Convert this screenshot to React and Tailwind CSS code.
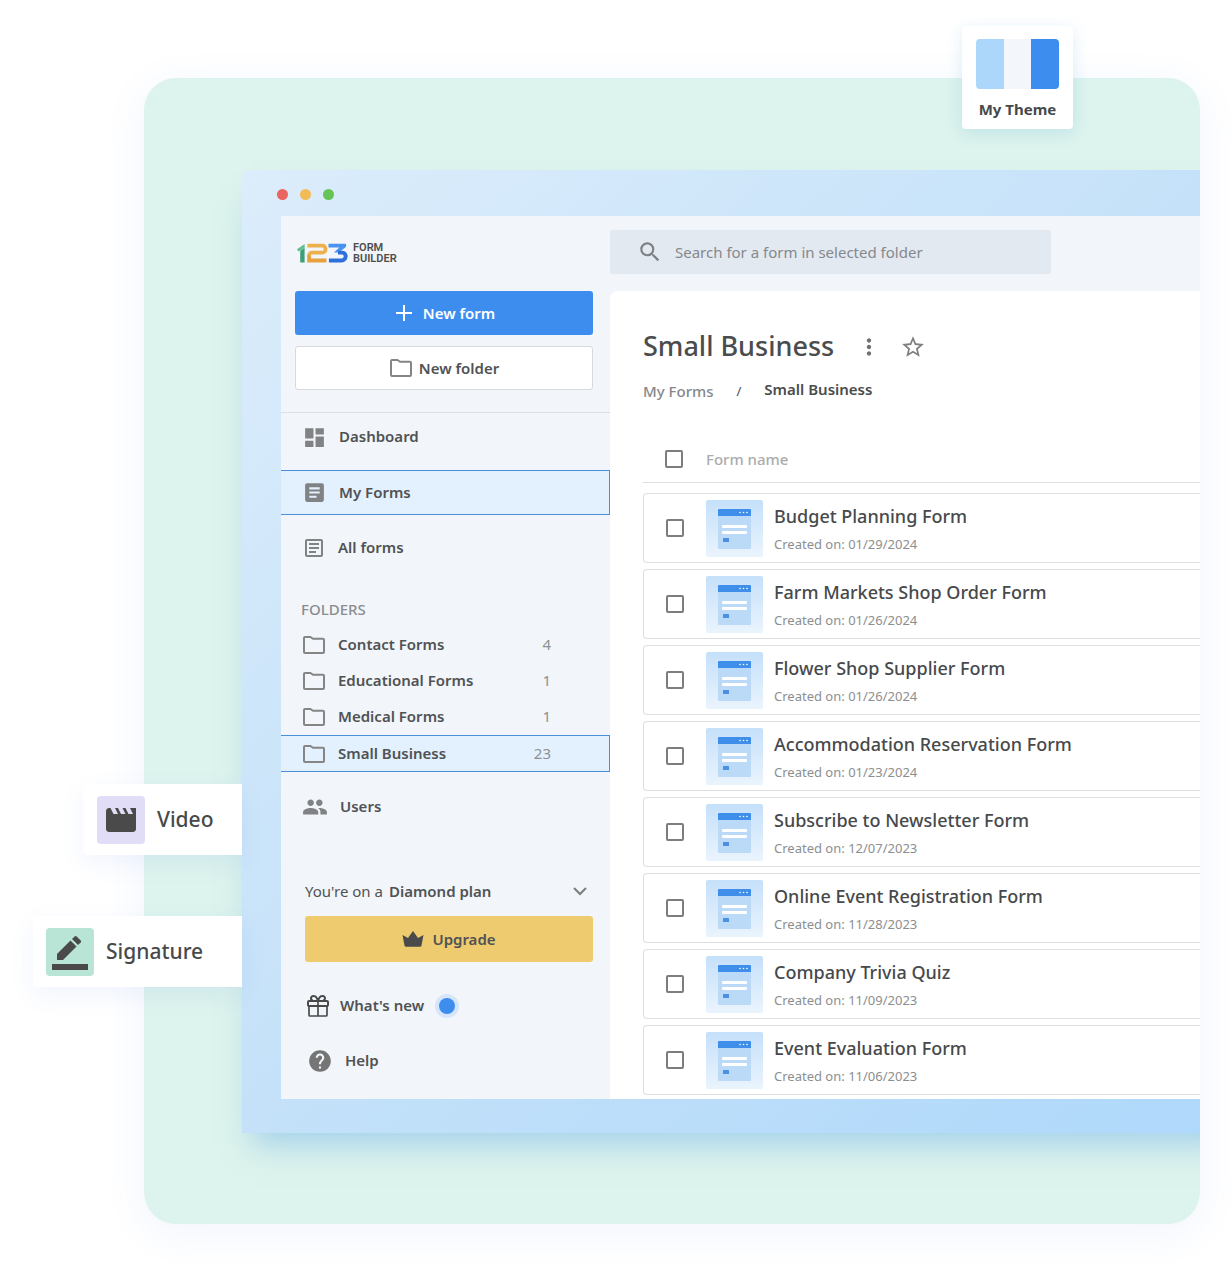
import { useState } from "react";
import {
  MdArticle,
  MdDashboard,
  MdHelp,
  MdMoreVert,
  MdMovie,
  MdOutlineArticle,
  MdPeople,
  MdSearch,
  MdStarBorder,
} from "react-icons/md";

const folders = [
  { name: "Contact Forms", count: 4 },
  { name: "Educational Forms", count: 1 },
  { name: "Medical Forms", count: 1 },
  { name: "Small Business", count: 23 },
];

const forms = [
  { name: "Budget Planning Form", created: "01/29/2024" },
  { name: "Farm Markets Shop Order Form", created: "01/26/2024" },
  { name: "Flower Shop Supplier Form", created: "01/26/2024" },
  { name: "Accommodation Reservation Form", created: "01/23/2024" },
  { name: "Subscribe to Newsletter Form", created: "12/07/2023" },
  { name: "Online Event Registration Form", created: "11/28/2023" },
  { name: "Company Trivia Quiz", created: "11/09/2023" },
  { name: "Event Evaluation Form", created: "11/06/2023" },
];

function FolderIcon() {
  return (
    <svg width="24" height="20" viewBox="0 0 24 20" fill="none" stroke="#858585" strokeWidth="2" strokeLinejoin="round" className="shrink-0">
      <path d="M3 2h5.5l2.500 1.800h10a1 1 0 0 1 1 1V17a1 1 0 0 1-1 1H3a1 1 0 0 1-1-1V3a1 1 0 0 1 1-1z" />
    </svg>
  );
}

function Logo() {
  return (
    <div className="flex items-center gap-[5px]">
      <svg width="51" height="20" viewBox="0 0 51 20" fill="none">
        <path d="M0 6.2 7.6 1v4L1.4 8.6z" fill="#5fbf8f" />
        <path d="M3.2 7.8 7.6 5v14.5H3.2z" fill="#3f9f76" />
        <path d="M10.5 2.6h14.8a3.2 3.2 0 0 1 3.2 3.2v.6a3.2 3.2 0 0 1-3.2 3.2H15a3 3 0 0 0-3 3v.4" stroke="#eeb04a" strokeWidth="3.8" />
        <path d="M10.2 12.4h3.9V15.6h15.4v3.9H10.2z" fill="#e9a03f" />
        <path d="M31.5 .7h17.6v3L42 9.6h-5.2l5.6-5H31.5z" fill="#4a93ee" />
        <path d="M41 9.6h4.4a3.9 3.9 0 0 1 3.3 3.6 4.2 4.2 0 0 1-4.2 4.3H31.9" stroke="#2f6fdc" strokeWidth="3.9" />
      </svg>
      <div className="font-['Roboto',sans-serif] text-[11px] leading-[11px] font-semibold text-[#4d4d4d]">
        FORM
        <br />
        BUILDER
      </div>
    </div>
  );
}

function FormThumb() {
  return (
    <svg width="57" height="57" viewBox="0 0 57 57" className="block">
      <defs>
        <linearGradient id="thumb-bg" x1="0" y1="0" x2="0" y2="1">
          <stop offset="0" stopColor="#c5e0fa" />
          <stop offset="1" stopColor="#eaf4fd" />
        </linearGradient>
      </defs>
      <rect width="57" height="57" rx="2" fill="url(#thumb-bg)" />
      <rect x="12" y="9" width="33" height="40" rx="1" fill="#badaf8" />
      <path d="M13 9h31a1 1 0 0 1 1 1v6H12v-6a1 1 0 0 1 1-1z" fill="#3f8fea" />
      <circle cx="34" cy="12.5" r=".8" fill="#fff" />
      <circle cx="37.5" cy="12.5" r=".8" fill="#fff" />
      <circle cx="41" cy="12.5" r=".8" fill="#fff" />
      <rect x="16" y="25" width="25" height="3" rx="1" fill="#fff" />
      <rect x="16" y="31" width="25" height="3" rx="1" fill="#fff" />
      <rect x="17" y="38" width="6" height="4" rx=".5" fill="#4a8fe0" />
    </svg>
  );
}

function Checkbox({ label, checked, onChange }) {
  return (
    <input
      type="checkbox"
      aria-label={label}
      checked={checked}
      onChange={onChange}
      className="block w-[18px] h-[18px] appearance-none rounded-xs border-2 border-[#7d7d7d] bg-white checked:bg-[#3f8fee]"
    />
  );
}

function NavItem({ icon, label, active }) {
  return (
    <a
      href="#"
      className={
        active
          ? "flex items-center h-[45px] my-[9px] pl-[21px] gap-3 bg-[#e3f0fd] border border-l-0 border-[#4a8fd9]"
          : "flex items-center h-12 pl-[21px] gap-3"
      }
    >
      {icon}
      <span className="pb-0.5">{label}</span>
    </a>
  );
}

function Sidebar({ activeFolder, onSelect }) {
  return (
    <aside className="w-[329px] shrink-0 text-[15px] leading-6 font-semibold text-[#505254]">
      <div className="h-[75px] pl-4 pt-[26px]">
        <Logo />
      </div>

      <div className="flex flex-col gap-[11px] pl-[14px] pr-[17px] pb-[22px] border-b border-[#dcdfe3]">
        <button className="flex items-center justify-center gap-2 h-11 rounded-[3px] bg-[#3d8dee] text-white">
          <svg width="22" height="22" viewBox="0 0 22 22" stroke="currentColor" strokeWidth="2">
            <path d="M11 3v16M3 11h16" />
          </svg>
          New form
        </button>
        <button className="flex items-center justify-center gap-1.5 h-11 rounded-[3px] bg-white border border-[#d6d9dd]">
          <FolderIcon />
          New folder
        </button>
      </div>

      <nav>
        <NavItem icon={<MdDashboard size={25} color="#808284" />} label="Dashboard" />
        <NavItem icon={<MdArticle size={25} color="#808284" />} label="My Forms" active />
        <NavItem icon={<MdOutlineArticle size={24} color="#808284" />} label="All forms" />

        <h2 className="mt-[25px] mb-[6px] pl-5 font-medium text-[#8a8c8f]">FOLDERS</h2>
        {folders.map((f) => (
          <button
            key={f.name}
            onClick={() => onSelect(f.name)}
            className={
              f.name === activeFolder
                ? "flex items-center w-full h-[37px] pl-[21px] pr-[58px] gap-3 bg-[#e3f0fd] border border-l-0 border-[#4a8fd9]"
                : "flex items-center w-full h-9 pl-[21px] pr-[59px] gap-3"
            }
          >
            <FolderIcon />
            <span className="pb-0.5">{f.name}</span>
            <span className="ml-auto pb-0.5 font-normal text-[#8d9196]">{f.count}</span>
          </button>
        ))}

        <div className="mt-[11px]">
          <NavItem icon={<MdPeople size={26} color="#808284" />} label="Users" />
        </div>
      </nav>

      <div className="mt-12 pl-6 pr-[17px]">
        <button className="flex items-center w-full pr-1">
          <span className="flex gap-1.5">
            <span className="font-normal">You're on a</span>
            <span>Diamond plan</span>
          </span>
          <svg width="18" height="18" viewBox="0 0 18 18" fill="none" stroke="#7d7d7d" strokeWidth="2" className="ml-auto">
            <path d="m3 6 6 6 6-6" />
          </svg>
        </button>
        <button className="mt-[13px] flex items-center justify-center gap-2 w-full h-[46px] rounded-[3px] bg-[#eecb6f]">
          <svg width="22" height="18" viewBox="0 0 22 18" fill="#4a4a4a">
            <path d="M.5 5 6 8 11 1l5 7 5.500-3L19.500 15.500a1.500 1.500 0 0 1-1.500 1.200H4a1.500 1.500 0 0 1-1.500-1.200z" />
          </svg>
          Upgrade
        </button>
      </div>

      <a href="#" className="mt-5 flex items-center h-12 pl-[25px] gap-2.5">
        <svg width="24" height="24" viewBox="0 0 24 24" fill="none" stroke="#4a4a4a" strokeWidth="2">
          <rect x="2" y="7" width="20" height="5" rx="1" />
          <path d="M3 12v9a1 1 0 0 0 1 1h16a1 1 0 0 0 1-1v-9M12 7v15" strokeWidth="1.700" />
          <path d="M12 7C11 3.500 9.500 2 7.800 2a2.300 2.300 0 0 0-1 4.500M12 7c1-3.500 2.500-5 4.200-5a2.300 2.300 0 0 1 1 4.500" />
        </svg>
        <span className="pb-0.5">What's new</span>
        <span className="ml-[5px] w-4 h-4 rounded-full bg-[#3d8dee] ring-4 ring-[#d5e6fa]" />
      </a>
      <a href="#" className="mt-[7px] mb-[14px] flex items-center h-12 pl-[26px] gap-3">
        <MdHelp size={26} color="#757575" />
        <span className="pb-0.5">Help</span>
      </a>
    </aside>
  );
}

function FormsTable() {
  const [selected, setSelected] = useState([]);

  const toggle = (name) => {
    setSelected((prev) => (prev.includes(name) ? prev.filter((n) => n !== name) : [...prev, name]));
  };

  return (
    <table className="w-full border-separate border-spacing-x-0 border-spacing-y-[6px] text-left">
      <thead>
        <tr>
          <th className="w-[63px] p-0 pb-1">
            <div className="flex items-center h-[47px] pl-[22px] border-b border-[#dddfe1]">
              <Checkbox
                label="Select all forms"
                checked={selected.length === forms.length}
                onChange={(e) => setSelected(e.target.checked ? forms.map((f) => f.name) : [])}
              />
            </div>
          </th>
          <th colSpan={2} className="p-0 pb-1">
            <div className="flex items-center h-[47px] border-b border-[#dddfe1] text-[15px] font-medium text-[#aaacae]">
              Form name
            </div>
          </th>
        </tr>
      </thead>
      <tbody>
        {forms.map((f) => (
          <tr key={f.name} className="h-[70px]">
            <td className="w-[63px] p-0 pl-[22px] border-y border-l border-[#dddfe1] rounded-l">
              <Checkbox label={f.name} checked={selected.includes(f.name)} onChange={() => toggle(f.name)} />
            </td>
            <td className="w-[68px] p-0 border-y border-[#dddfe1]">
              <FormThumb />
            </td>
            <td className="p-0 pt-0.5 border-y border-[#dddfe1]">
              <div className="text-[18px] leading-6 font-medium text-[#47494b]">{f.name}</div>
              <div className="mt-1.5 text-[13px] leading-5 text-[#8c8e90]">Created on: {f.created}</div>
            </td>
          </tr>
        ))}
      </tbody>
    </table>
  );
}

function PencilIcon() {
  return (
    <svg width="36" height="36" viewBox="0 0 36 36" fill="#4a4a4a">
      <path d="M5 20 18.500 6.500l6 6L11 26H5z" />
      <path d="m20 5 2.600-2.600a1.500 1.500 0 0 1 2.100 0l4 4a1.500 1.500 0 0 1 0 2.100L26 11.100z" />
      <path d="M0 30h36v6H0z" />
    </svg>
  );
}

export default function App() {
  const [activeFolder, setActiveFolder] = useState("Small Business");

  return (
    <div className="relative bg-white pt-[78px] pl-36 pr-8 pb-[42px] font-['Noto_Sans','Open_Sans',sans-serif]">
      <div className="overflow-hidden rounded-[32px] bg-[#ddf3ed] pt-[92px] pl-[98px] pb-[91px] shadow-[0_8px_40px_#3d6fe014]">
        {/* The window runs on past the clipped right edge */}
        <div className="-mr-10 rounded-tl-lg bg-linear-to-br from-[#dcedfb] via-[#c4e1f9] to-[#aed8fb] pl-[39px] pb-[34px] shadow-[0_22px_28px_-10px_#6fb4e880]">
          <div className="flex items-center gap-3 h-[46px] pt-[3px] -ml-1">
            <span className="w-[11px] h-[11px] rounded-full bg-[#ea6460]" />
            <span className="w-[11px] h-[11px] rounded-full bg-[#f2bb55]" />
            <span className="w-[11px] h-[11px] rounded-full bg-[#66c355]" />
          </div>

          <div className="flex bg-[#f2f6fa]">
            <Sidebar activeFolder={activeFolder} onSelect={setActiveFolder} />

            <main className="flex-1 min-w-0 flex flex-col text-[#4a4c4e]">
              <div className="h-[75px] pt-[14px]">
                <label className="flex items-center gap-3 w-[441px] h-11 pl-[27px] rounded-[3px] bg-[#e3e9f1]">
                  <MdSearch size={26} color="#7d8084" />
                  <input
                    type="search"
                    aria-label="Search forms"
                    placeholder="Search for a form in selected folder"
                    className="flex-1 min-w-0 bg-transparent text-[15px] text-[#4a4c4e] placeholder:text-[#85888c] outline-none"
                  />
                </label>
              </div>

              <section className="flex-1 pl-[33px] pt-9 bg-white rounded-tl-lg">
                <div className="flex items-center h-10">
                  <h1 className="pb-0.5 text-[27px] leading-[38px] font-medium">{activeFolder}</h1>
                  <button aria-label="More options" className="ml-[22px]">
                    <MdMoreVert size={26} color="#6f7173" />
                  </button>
                  <button aria-label="Add to favourites" className="ml-[18px]">
                    <MdStarBorder size={26} color="#7d7f81" />
                  </button>
                </div>
                <nav className="flex items-center gap-[23px] mt-3 h-6 text-[15px] leading-6">
                  <a href="#" className="font-medium text-[#85878a]">
                    My Forms
                  </a>
                  <span className="text-[13px]">/</span>
                  <span className="pb-1 font-semibold">{activeFolder}</span>
                </nav>
                <div className="mt-[27px] -mb-[3px]">
                  <FormsTable />
                </div>
              </section>
            </main>
          </div>
        </div>
      </div>

      {/* Floating badges */}
      <div className="absolute right-[159px] top-[26px] w-[111px] h-[103px] px-[14px] pt-[13px] rounded bg-white shadow-[0_4px_16px_#3f9fd02e] text-center">
        <div className="flex h-[50px] rounded overflow-hidden">
          <span className="flex-1 bg-[#acd7fb]" />
          <span className="flex-1 bg-[#f3f6fb]" />
          <span className="flex-1 bg-[#3d8dee]" />
        </div>
        <div className="mt-2 -mx-2 text-[15px] leading-6 font-bold text-[#47494b]">My Theme</div>
      </div>
      <div className="absolute left-[83px] top-[784px] flex items-center gap-3 w-[159px] h-[71px] pl-[14px] rounded-l bg-white shadow-[0_8px_24px_#3d6fe014] text-[21px] font-medium text-[#47494b]">
        <span className="flex items-center justify-center w-12 h-12 rounded bg-[#e2ddf6]">
          <MdMovie size={36} color="#4a4a4a" />
        </span>
        Video
      </div>
      <div className="absolute left-[33px] top-[916px] flex items-center gap-3 w-[209px] h-[71px] pl-[13px] rounded-l bg-white shadow-[0_8px_24px_#3d6fe014] text-[21px] font-medium text-[#47494b]">
        <span className="flex items-center justify-center w-12 h-12 rounded bg-[#b9e5d6]">
          <PencilIcon />
        </span>
        Signature
      </div>
    </div>
  );
}
